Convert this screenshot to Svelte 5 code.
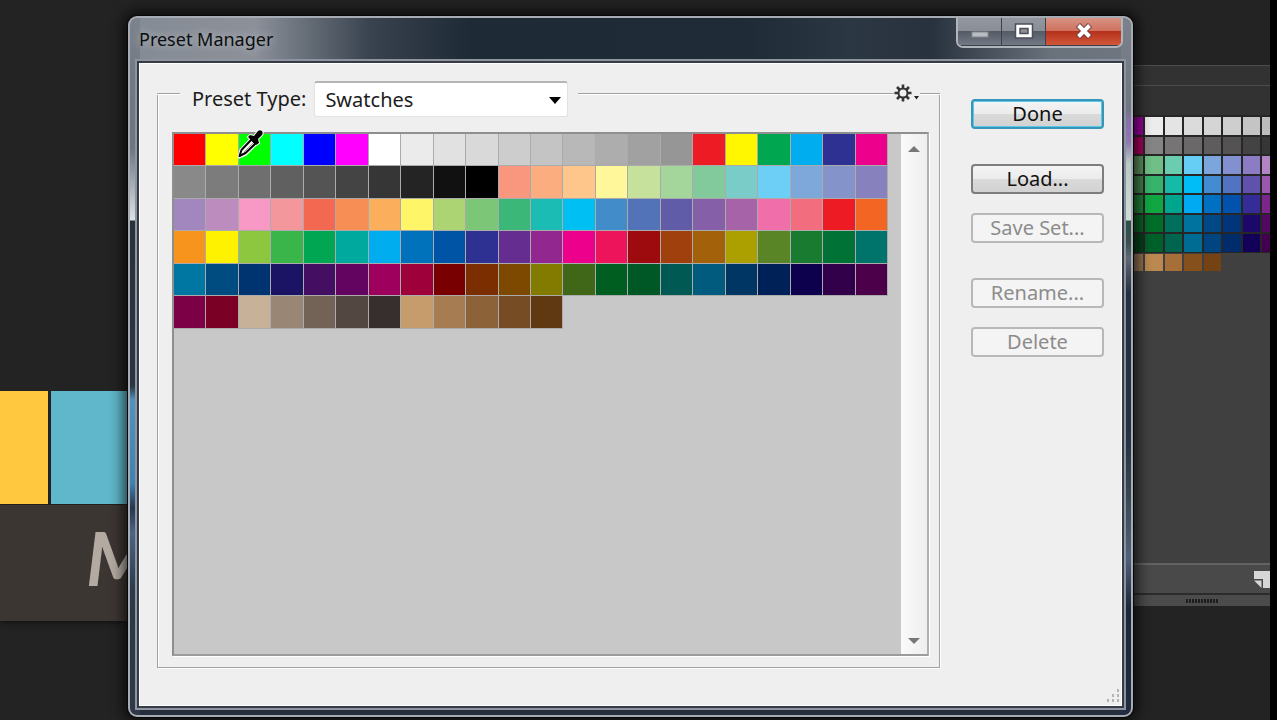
<script lang="ts">
  type Action = { label: string; disabled?: boolean; primary?: boolean; gap?: boolean };

  const swatches: string[] = [
    '#ff0000', '#ffff00', '#00ff00', '#00ffff', '#0000ff', '#ff00ff', '#ffffff', '#ebebeb', '#e1e1e1', '#d9d9d9', '#cdcdcd',
    '#c4c4c4', '#b8b8b8', '#adadad', '#a1a1a1', '#969696', '#ed1c24', '#fff700', '#00a650', '#00aeef', '#2e3192', '#ec008c',
    '#898989', '#7c7c7c', '#6f6f6f', '#606060', '#545454', '#444444', '#363636', '#242424', '#111111', '#000000', '#f8977d',
    '#fbad80', '#fec68a', '#fff799', '#c6e19b', '#a4d69c', '#82ca9c', '#7accc8', '#6dcff6', '#7ea7da', '#8493ca', '#8781bd',
    '#a187be', '#bc8cbf', '#f799c4', '#f4979c', '#f26850', '#f68e56', '#fbaf5d', '#fff568', '#acd473', '#7bc677', '#3bb878',
    '#1bbcb4', '#00bff3', '#438cca', '#5273b8', '#605ca8', '#855fa8', '#a763a8', '#f06ea9', '#f26d7d', '#ed1c24', '#f26522',
    '#f7941d', '#fff200', '#8dc73f', '#39b54a', '#00a651', '#00a99d', '#00aeef', '#0072bc', '#0054a6', '#2e3192', '#662d91',
    '#92278f', '#ec008c', '#ed145b', '#9e0b0f', '#a0410d', '#a36209', '#aba000', '#598527', '#197b30', '#007236', '#00746b',
    '#0076a3', '#004b80', '#003471', '#1b1464', '#440e62', '#630460', '#9e005d', '#9e0039', '#790000', '#7b2e00', '#7d4900',
    '#827b00', '#406618', '#005e20', '#005826', '#005952', '#005b7f', '#003663', '#002157', '#0d004c', '#32004b', '#4b0049',
    '#7b0046', '#7a0026', '#c7b299', '#998675', '#736357', '#534741', '#362f2d', '#c69c6d', '#a67c52', '#8c6239', '#754c24',
    '#603913',
  ];

  const panelSwatches: string[] = [
    '#98009a', '#ececec', '#e4e4e4', '#dbdbdb', '#d5d5d5', '#cecece', '#c4c4c4', '#bcbcbc',
    '#a3005c', '#848484', '#767474', '#6a6868', '#5e5c5c', '#545252', '#434343', '#363636',
    '#5c8f5c', '#6fbf86', '#6bcdb0', '#66cdf5', '#7ba5dc', '#8290cf', '#8c7cc4', '#b384c4',
    '#417f48', '#37b36c', '#16bba8', '#00bdf8', '#448cd2', '#5272c2', '#5f52ac', '#9a58ac',
    '#1f7f38', '#10a642', '#00a58e', '#00aaf2', '#0070c2', '#0052ac', '#352c98', '#7c268c',
    '#0d5f24', '#006e28', '#00705c', '#00749f', '#004886', '#00357a', '#1c0868', '#520860',
    '#05421a', '#00602a', '#00654f', '#006c94', '#004580', '#002c6c', '#130058', '#430050',
    '#917050', '#bb8850', '#a66f38', '#86501c', '#754214',
  ];

  const actions: Action[] = [
    { label: 'Done', primary: true },
    { label: 'Load...', gap: true },
    { label: 'Save Set...', disabled: true },
    { label: 'Rename...', disabled: true, gap: true },
    { label: 'Delete', disabled: true },
  ];

  let presetType = $state('Swatches');
  let picked = $state(2);
</script>

<div class="desktop">
  <div class="artwork">
    <div class="tiles"><span class="yellow"></span><span class="teal"></span></div>
    <div class="caption">M</div>
  </div>

  <section class="window" aria-labelledby="window-title">
    <header class="titlebar">
      <h1 id="window-title">Preset Manager</h1>
      <div class="controls">
        <button class="ctl" aria-label="Minimize">
          <svg width="18" height="18" viewBox="0 0 18 18"><rect x="1" y="10" width="16" height="5" fill="#b9bcc2" stroke="#83878f" /></svg>
        </button>
        <button class="ctl" aria-label="Maximize">
          <svg width="20" height="18" viewBox="0 0 20 18">
            <path d="M1.500 2h17v14h-17z" fill="#fff" stroke="#4b4f59" stroke-width="1.500" />
            <path d="M6 6.500h8v5H6z" fill="#8c9099" stroke="#4b4f59" stroke-width="1.500" />
          </svg>
        </button>
        <button class="ctl close" aria-label="Close">
          <svg width="20" height="18" viewBox="0 0 20 18">
            <path d="M4 3l12 12M16 3L4 15" stroke="#6b3a3c" stroke-width="6" />
            <path d="M4.500 3.500l11 11M15.500 3.500l-11 11" stroke="#fff" stroke-width="4" />
          </svg>
        </button>
      </div>
    </header>

    <div class="client">
      <div class="group">
        <div class="legend">
          <span class="rule lead"></span>
          <label for="preset-type">Preset Type:</label>
          <div class="select">
            <select id="preset-type" bind:value={presetType}>
              <option>Swatches</option>
            </select>
            <svg class="caret" width="12" height="7" viewBox="0 0 12 7"><path d="M0 0h12L6 7z" fill="#000" /></svg>
          </div>
          <span class="rule fill"></span>
          <button class="gear" aria-label="Options">
            <svg width="26" height="18" viewBox="0 0 26 18">
              <g stroke="#333" stroke-width="2.600">
                <path d="M9 .5v17M.5 9h17M3 3l12 12M15 3L3 15" />
              </g>
              <circle cx="9" cy="9" r="4.500" fill="#f0f0f0" stroke="#333" stroke-width="2" />
              <path d="M20 12h5l-2.500 3.500z" fill="#222" />
            </svg>
          </button>
          <span class="rule tail"></span>
        </div>

        <div class="list">
          <div class="swatch-area">
            <div class="swatches">
              {#each swatches as color, i}
                <button
                  class="swatch"
                  style="background-color: {color}"
                  aria-label={color}
                  aria-pressed={picked === i}
                  onclick={() => (picked = i)}
                ></button>
              {/each}
            </div>
            <svg class="eyedropper" width="28" height="30" viewBox="0 0 28 30">
              <path d="M2 28l2-7L15 9l5 5L9 25z" fill="#fff" stroke="#fff" stroke-width="3" stroke-linejoin="round" />
              <path d="M13 6l4 1 4-5c3-2 6 1 4 4l-4 4 1 4-3 2-8-8z" fill="#000" stroke="#fff" stroke-width="2" />
              <path d="M2.500 27l2-6L14.500 10.500l4 4L8.500 24z" fill="#fff" stroke="#000" stroke-width="2" stroke-linejoin="round" />
              <path d="M13 6l4 1 4-5c3-2 6 1 4 4l-4 4 1 4-3 2-8-8z" fill="#000" />
              <path d="M7 23l9-9" stroke="#999" stroke-width="1" />
            </svg>
          </div>
          <div class="scrollbar">
            <svg width="12" height="6" viewBox="0 0 12 6"><path d="M0 6h12L6 0z" fill="#777" /></svg>
            <svg width="12" height="6" viewBox="0 0 12 6"><path d="M0 0h12L6 6z" fill="#777" /></svg>
          </div>
        </div>
      </div>

      <div class="actions">
        {#each actions as a}
          <button class="action" class:primary={a.primary} class:gap={a.gap} disabled={a.disabled}>{a.label}</button>
        {/each}
      </div>

      <svg class="grip" width="14" height="14" viewBox="0 0 14 14" fill="#b4b4b4">
        <path d="M11 0h2v3h-2zM6 5h2v3H6zM11 5h2v3h-2zM1 10h2v3H1zM6 10h2v3H6zM11 10h2v3h-2z" />
      </svg>
    </div>
  </section>

  <aside class="panel">
    <div class="tab"></div>
    <div class="tab second"></div>
    <div class="panel-body">
      <div class="mini">
        {#each panelSwatches as color}
          <span style="background-color: {color}"></span>
        {/each}
      </div>
    </div>
    <div class="panel-foot">
      <svg width="17" height="17" viewBox="0 0 17 17">
        <path d="M0 0h17v17H9V8H0z" fill="#d6d6d6" />
        <path d="M0 9.500h7.500V17z" fill="#d6d6d6" />
      </svg>
    </div>
    <div class="panel-grip"><span></span></div>
  </aside>
</div>

<style>
  :global(body) { background: #232323; }

  .desktop {
    display: grid;
    grid-template-columns: 128px minmax(0, 1fr) 137px;
    min-height: 100vh;
    padding-right: 7px;
    box-sizing: border-box;
    background: linear-gradient(to left, #000 7px, #232323 7px);
    font-family: 'Noto Sans', Tahoma, sans-serif;
    overflow: hidden;
  }

  /* canvas behind the window */
  .artwork { padding-top: 391px; overflow: hidden; }
  .tiles { display: flex; gap: 3px; height: 113px; }
  .yellow { width: 48px; background: #ffc83e; }
  .teal { flex: 1; background: #60b6cb; }
  .caption {
    height: 116px;
    margin-top: 1px;
    padding-left: 86px;
    background: #3c3633;
    box-shadow: 0 3px 5px #161616;
    color: #b3aaa1;
    font: italic 700 75px/104px Lato, 'Noto Sans', sans-serif;
  }

  /* window frame */
  .window {
    z-index: 1;
    display: flex;
    flex-direction: column;
    margin: 16px 0 3px;
    padding: 0 5px 5px;
    border: 2px solid #a7abb3;
    border-radius: 9px;
    box-shadow: 0 0 0 1px #080808, 0 0 14px 4px rgba(0, 0, 0, 0.75);
    background:
      linear-gradient(#7d838c, #727982 60px, #6d757e 130px, #c3c8cd 185px, #dde1e3 202px, #28323a 203px, #2c3440 350px, #2b3440 368px, #4f93bf 382px, #3f83b2 465px, #26354d 490px, #4c6585 515px, #2b3b4c 570px, #2a3a44 600px, #303848) left / 10px 100% no-repeat,
      linear-gradient(#7b818b, #6f767f 90px, #8b6fb0 105px, #8f79b2 125px, #b7cbc3 145px, #d0ded8 202px, #2c5046 203px, #36524e 225px, #5f6872 240px, #242f42 275px, #222e42 410px, #33444f 470px, #50617a 540px, #1b253b 590px, #222c40) right / 10px 100% no-repeat,
      linear-gradient(90deg, #858b94, #8b9099 125px, #39434f 240px, #1f2a37 340px, #202b38 62%, #2b3743 72%, #28323e 80%, #69717b 92%, #6f7680) top / 100% 45px no-repeat,
      #262e3d;
  }
  .titlebar {
    display: flex;
    justify-content: space-between;
    align-items: flex-start;
    height: 42px;
    padding-left: 4px;
  }
  h1 {
    margin: 0;
    font: 18px/42px 'Noto Sans', 'Segoe UI', sans-serif;
    color: #0b0d10;
    text-shadow: 0 0 10px rgba(255, 255, 255, 0.5);
  }
  .controls {
    display: flex;
    margin-right: 3px;
    border: 2px solid #b0b4bb;
    border-top: 0;
    border-radius: 0 0 7px 7px;
    overflow: hidden;
  }
  .ctl {
    display: grid;
    place-items: center;
    width: 44px;
    height: 28px;
    padding: 0 0 2px;
    border: 1px solid #3c424c;
    border-width: 0 1px 1px 0;
    background: linear-gradient(#9297a0, #888d96 50%, #555b66 50%, #747a85);
  }
  .close {
    width: 75px;
    border-right: 0;
    background: linear-gradient(#d89384, #cf6f5c 50%, #b5311c 50%, #d2573a);
  }

  .client {
    position: relative;
    flex: 1;
    display: flex;
    align-items: flex-start;
    gap: 31px;
    padding: 17px 17px 37px;
    border: 1px solid #fff;
    outline: 2px solid #353c47;
    box-shadow: 0 0 0 4px #8e949d;
    margin: 3px 4px 4px;
    background: #efefef;
  }

  /* group box */
  .group {
    position: relative;
    align-self: stretch;
    flex: 1;
    min-width: 0;
    display: flex;
    flex-direction: column;
    gap: 15px;
    padding: 0 11px 12px 15px;
  }
  .group::before {
    content: '';
    position: absolute;
    inset: 12px 0 0;
    border: 1px solid #a2a2a2;
    border-top: 0;
    box-shadow: 1px 1px #fff, inset 1px 0 #fff;
    pointer-events: none;
  }
  .legend {
    position: relative;
    display: flex;
    align-items: flex-start;
    margin: 0 -11px 0 -15px;
  }
  .rule { height: 2px; margin-top: 12px; background: linear-gradient(#a2a2a2 50%, #fff 50%); }
  .lead { width: 23px; }
  .fill { flex: 1; margin-left: 10px; }
  .tail { width: 20px; }
  label {
    margin-left: 12px;
    font-size: 20px;
    line-height: 36px;
    color: #1c1c1c;
  }
  .select { position: relative; width: 254px; margin-left: 8px; }
  select {
    display: block;
    appearance: none;
    width: 100%;
    height: 36px;
    padding: 0 10px;
    border: 1px solid #e2e2e2;
    border-top: 2px solid #b5b5b5;
    border-radius: 3px;
    background: #fff;
    font: 20px 'Noto Sans', Tahoma, sans-serif;
    color: #1c1c1c;
  }
  .caret { position: absolute; right: 7px; top: 16px; pointer-events: none; }
  .gear { display: flex; margin-top: 3px; padding: 0; border: 0; background: none; }

  .list {
    position: relative;
    flex: 1;
    display: flex;
    border: 2px solid #8f8f8f;
    border-right-color: #b0b0b0;
    border-bottom-color: #9c9c9c;
    box-shadow: 1px 1px #fff;
    background: #c8c8c8;
  }
  .swatch-area { position: relative; flex: 1; padding-right: 13px; }
  .swatches { display: grid; grid-template-columns: repeat(22, 1fr); }
  .swatch {
    aspect-ratio: 1;
    min-width: 0;
    padding: 0;
    border: 1px solid #ababab;
    border-width: 0 1px 1px 0;
  }
  .eyedropper { position: absolute; left: 63px; top: -5px; pointer-events: none; }
  .scrollbar {
    display: flex;
    flex-direction: column;
    justify-content: space-between;
    align-items: center;
    width: 26px;
    padding: 12px 0 10px;
    box-sizing: border-box;
    background: linear-gradient(90deg, #fafafa, #eee);
  }

  .actions { display: flex; flex-direction: column; gap: 19px; width: 133px; padding-top: 18px; }
  .action {
    height: 30px;
    padding: 0;
    border: 2px solid #7d7d7d;
    border-radius: 4px;
    background: linear-gradient(#f4f4f4, #ebebeb 50%, #dadada 50%, #d2d2d2);
    font: 20px/24px 'Noto Sans', Tahoma, sans-serif;
    color: #111;
  }
  .action.gap { margin-top: 16px; }
  .action.primary { border-color: #3796b8; box-shadow: inset 0 0 0 1px #5ec8ea; }
  .action:disabled { border-color: #b8b8b8; background: #f4f4f4; color: #8c8c8c; }
  .grip { position: absolute; right: 1px; bottom: 2px; }

  /* docked swatches panel */
  .panel { overflow: hidden; padding-top: 65px; }
  .tab { height: 19px; border-top: 1px solid #4c4c4c; background: #323232; }
  .second { height: 29px; }
  .panel-body { height: 448px; background: #404040; }
  .mini {
    display: grid;
    grid-template-columns: 10px repeat(6, 1fr) 8px;
    gap: 2px;
    padding-top: 2px;
    background: linear-gradient(#262626 138px, transparent 138px);
  }
  .mini span { aspect-ratio: 1; }
  .mini span:nth-child(8n + 1), .mini span:nth-child(8n) { aspect-ratio: auto; }
  .panel-foot {
    display: flex;
    justify-content: flex-end;
    align-items: center;
    height: 28px;
    border-top: 2px solid #636363;
    background: #494949;
  }
  .panel-foot svg { margin-right: -1px; }
  .panel-grip {
    display: grid;
    place-items: center;
    height: 11px;
    border-top: 2px solid #2b2b2b;
    background: #4b4b4b;
  }
  .panel-grip span { width: 32px; height: 4px; background: repeating-linear-gradient(90deg, #1e1e1e 0 2px, #4b4b4b 2px 3px); }
</style>
